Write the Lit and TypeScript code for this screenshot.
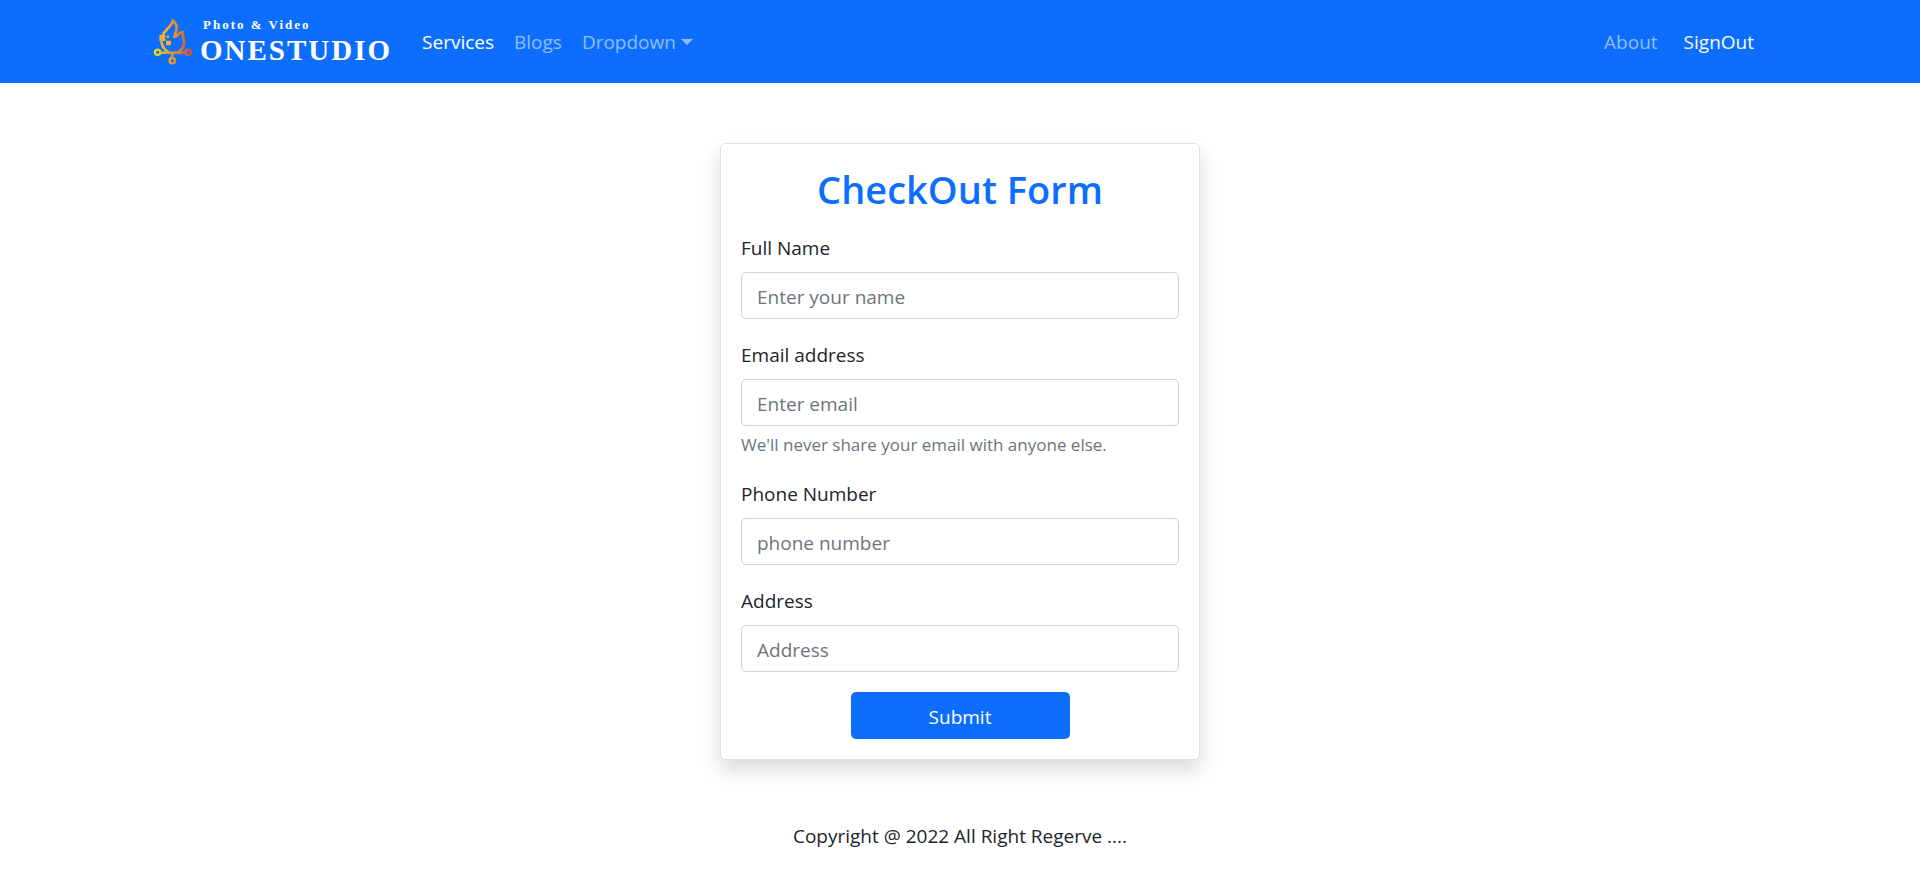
import { LitElement, html, css } from "lit";
import { customElement } from "lit/decorators.js";

interface Field {
  id: string;
  label: string;
  type: string;
  placeholder: string;
  help?: string;
}

const FIELDS: Field[] = [
  { id: "name", label: "Full Name", type: "text", placeholder: "Enter your name" },
  {
    id: "email",
    label: "Email address",
    type: "email",
    placeholder: "Enter email",
    help: "We'll never share your email with anyone else.",
  },
  { id: "phone", label: "Phone Number", type: "text", placeholder: "phone number" },
  { id: "address", label: "Address", type: "text", placeholder: "Address" },
];

@customElement("studio-logo")
class StudioLogo extends LitElement {
  static styles = css`
    :host {
      display: flex;
      align-items: center;
      gap: 7px;
      color: #fff;
      font-family: "Liberation Serif", serif;
      font-weight: 700;
      white-space: nowrap;
    }
    .flame {
      width: 43px;
      height: 60px;
      flex: none;
    }
    .words {
      display: flex;
      flex-direction: column;
    }
    .tagline {
      padding-left: 3px;
      font-size: 13px;
      line-height: 16px;
      letter-spacing: 2px;
    }
    .name {
      font-size: 29px;
      line-height: 34px;
      letter-spacing: 2px;
    }
  `;

  render() {
    return html`
      <svg class="flame" viewBox="6 0 129 180" aria-hidden="true">
        <defs>
          <linearGradient id="fire" gradientUnits="userSpaceOnUse" x1="20" y1="0" x2="130" y2="0">
            <stop offset="0" stop-color="#e9d920" />
            <stop offset="0.35" stop-color="#f0a828" />
            <stop offset="0.7" stop-color="#e2792b" />
            <stop offset="1" stop-color="#dc4a2c" />
          </linearGradient>
        </defs>
        <g fill="none" stroke="url(#fire)" stroke-width="8" stroke-linejoin="round">
          <path
            d="M45 69C49 54 70 46 75 26C85 34 88 44 85 54C84 62 79 67 79 75C89 75 88 62 104 60C101 72 111 81 108 95C106 107 100 115 90 120"
          />
          <path d="M40 88C42 103 50 114 61 120" />
          <path d="M37 122H113" stroke-width="7" />
          <path d="M73 122V138" stroke-width="7" />
          <circle cx="29" cy="121" r="8" stroke-width="7" />
          <circle cx="73" cy="146" r="8" stroke-width="7" />
          <circle cx="121" cy="121" r="8" stroke-width="7" />
        </g>
        <g fill="#f3ae2b">
          <rect x="34" y="69" width="18" height="18" />
          <rect x="56" y="71" width="7" height="7" />
          <rect x="54" y="86" width="15" height="14" />
        </g>
      </svg>
      <span class="words">
        <span class="tagline">Photo &amp; Video</span>
        <span class="name">ONESTUDIO</span>
      </span>
    `;
  }
}

@customElement("site-navbar")
class SiteNavbar extends LitElement {
  static styles = css`
    :host {
      display: block;
      background: #0d6efd;
    }
    .container {
      box-sizing: border-box;
      max-width: 1650px;
      min-height: 83px;
      margin: 0 auto;
      padding: 0 15px;
      display: flex;
      flex-wrap: wrap;
      align-items: center;
    }
    .brand {
      margin-right: 20px;
      min-width: 241px;
      text-decoration: none;
    }
    .links {
      display: flex;
      align-items: center;
    }
    .end {
      margin-left: auto;
    }
    .link {
      display: flex;
      align-items: center;
      gap: 5px;
      padding: 10px;
      border: 0;
      background: none;
      color: rgba(255, 255, 255, 0.55);
      font: inherit;
      line-height: 30px;
      text-decoration: none;
      cursor: pointer;
    }
    .active {
      color: #fff;
    }
    .signout {
      padding: 10px 16px;
      color: #f8f9fa;
    }
    .caret {
      border: 6px solid transparent;
      border-top-color: currentColor;
      border-bottom: 0;
    }
  `;

  render() {
    return html`
      <nav class="container">
        <a class="brand" href="#home" aria-label="OneStudio"><studio-logo></studio-logo></a>
        <div class="links">
          <a class="link active" href="#services">Services</a>
          <a class="link" href="#blogs">Blogs</a>
          <button class="link" type="button" aria-haspopup="true">
            Dropdown<span class="caret"></span>
          </button>
        </div>
        <div class="links end">
          <a class="link" href="#about">About</a>
          <button class="link signout" type="button">SignOut</button>
        </div>
      </nav>
    `;
  }
}

@customElement("checkout-form")
class CheckoutForm extends LitElement {
  static styles = css`
    :host {
      display: block;
      box-sizing: border-box;
      width: 100%;
      max-width: 480px;
      padding: 20px;
      border: 1px solid #dee2e6;
      border-radius: 5px;
      background: #fff;
      box-shadow: 0 10px 20px rgba(0, 0, 0, 0.15);
    }
    .title {
      margin: 0 0 18px;
      color: #0d6efd;
      font-size: 38px;
      font-weight: 600;
      line-height: 50px;
      text-align: center;
    }
    .form {
      display: flex;
      flex-direction: column;
      gap: 20px;
    }
    .field {
      display: flex;
      flex-direction: column;
    }
    .label {
      margin-bottom: 8px;
      line-height: 32px;
    }
    .input {
      box-sizing: border-box;
      width: 100%;
      height: 47px;
      padding: 2px 15px 0;
      border: 1px solid #ced4da;
      border-radius: 5px;
      background: #fff;
      color: #212529;
      font: inherit;
    }
    .input::placeholder {
      color: #6c757d;
      opacity: 1;
    }
    .help {
      margin-top: 5px;
      color: #6c757d;
      font-size: 17px;
      line-height: 27px;
    }
    .submit {
      width: 50%;
      height: 47px;
      padding: 2px 15px 0;
      align-self: center;
      border: 0;
      border-radius: 5px;
      background: #0d6efd;
      color: #fff;
      font: inherit;
      cursor: pointer;
    }
  `;

  private submit(event: Event) {
    event.preventDefault();
  }

  render() {
    return html`
      <h1 class="title">CheckOut Form</h1>
      <form class="form" @submit=${this.submit}>
        ${FIELDS.map(
          (field) => html`
            <div class="field">
              <label class="label" for=${field.id}>${field.label}</label>
              <input
                class="input"
                id=${field.id}
                name=${field.id}
                type=${field.type}
                placeholder=${field.placeholder}
              />
              ${field.help ? html`<small class="help">${field.help}</small>` : null}
            </div>
          `
        )}
        <button class="submit" type="submit">Submit</button>
      </form>
    `;
  }
}

@customElement("app-root")
class AppRoot extends LitElement {
  static styles = css`
    :host {
      display: block;
      background: #fff;
      color: #212529;
      font-family: "Open Sans", "Noto Sans", sans-serif;
      font-size: 19px;
      line-height: 30px;
    }
    .main {
      display: flex;
      justify-content: center;
      padding: 60px 15px;
    }
    .footer {
      padding-bottom: 16px;
      line-height: 32px;
      text-align: center;
    }
  `;

  render() {
    return html`
      <site-navbar></site-navbar>
      <main class="main"><checkout-form></checkout-form></main>
      <footer class="footer">Copyright @ 2022 All Right Regerve ....</footer>
    `;
  }
}
